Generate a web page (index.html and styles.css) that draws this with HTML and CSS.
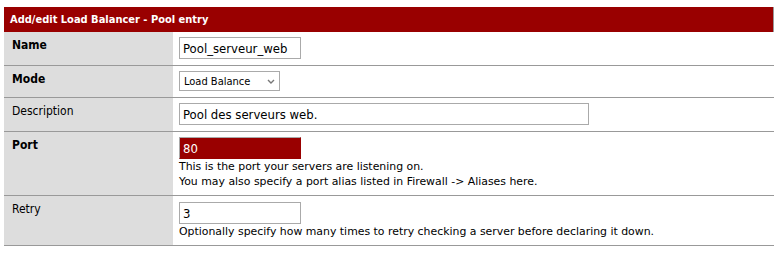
FILE: index.html
```html
<!DOCTYPE html>
<html lang="fr">
<head>
    <meta charset="UTF-8">
    <title>Load Balancer - Pool entry</title>
    <link rel="stylesheet" href="styles.css">
</head>
<body>
    <table class="form-table">
        <tr>
            <td colspan="2" class="list-topic">Add/edit Load Balancer - Pool entry</td>
        </tr>
        <tr>
            <td class="cell-label req">Name</td>
            <td class="cell-value"><input type="text" class="field field-short" value="Pool_serveur_web"></td>
        </tr>
        <tr>
            <td class="cell-label req">Mode</td>
            <td class="cell-value">
                <div class="select-wrap">
                    <select class="select">
                        <option selected>Load Balance</option>
                        <option>Manual Failover</option>
                    </select>
                    <svg class="select-arrow" width="8" height="5" viewBox="0 0 8 5"><path d="M1 1 L4 4 L7 1" fill="none" stroke="#777" stroke-width="1.4"/></svg>
                </div>
            </td>
        </tr>
        <tr>
            <td class="cell-label">Description</td>
            <td class="cell-value"><input type="text" class="field field-long" value="Pool des serveurs web."></td>
        </tr>
        <tr>
            <td class="cell-label req">Port</td>
            <td class="cell-value">
                <input type="text" class="field field-short field-alias" value="80">
                <div class="help">This is the port your servers are listening on.<br>You may also specify a port alias listed in Firewall -&gt; Aliases here.</div>
            </td>
        </tr>
        <tr>
            <td class="cell-label">Retry</td>
            <td class="cell-value cell-loose">
                <input type="text" class="field field-short" value="3">
                <div class="help">Optionally specify how many times to retry checking a server before declaring it down.</div>
            </td>
        </tr>
    </table>
</body>
</html>
```

FILE: styles.css
```css
body {
    margin: 7px 0 0 4px;
    font-family: Tahoma, "DejaVu Sans Condensed", "DejaVu Sans", sans-serif;
    font-size: 11px;
    color: #000;
    background-color: #fff;
}
.form-table {
    width: 770px;
    border-collapse: collapse;
}
.form-table td {
    vertical-align: top;
    border-bottom: 1px solid #999;
}
.list-topic {
    height: 25px;
    box-sizing: border-box;
    padding: 0 6px;
    background-color: #990000;
    color: #fff;
    font-weight: bold;
    font-size: 11px;
    vertical-align: middle !important;
    border-bottom: none !important;
    border-right: 1px solid #999;
}
.cell-label {
    width: 153px;
    padding: 6px 8px;
    background-color: #dddddd;
    font-size: 12px;
    line-height: 15px;
}
.req {
    font-weight: bold;
}
.cell-value {
    padding: 5px 6px 6px;
}
.cell-loose {
    padding-top: 6px;
}
.field {
    display: block;
    box-sizing: border-box;
    height: 22px;
    margin: 0;
    padding: 1px 3px 0;
    border: 1px solid #aaa;
    font-family: inherit;
    font-size: 13px;
    color: #000;
    outline: none;
}
.field-short {
    width: 122px;
}
.field-long {
    width: 410px;
}
.field-alias {
    background-color: #990000;
    color: #fff;
    border-color: #aaa #990000 #990000 #aaa;
}
.select-wrap {
    position: relative;
    width: 101px;
}
.select {
    display: block;
    box-sizing: border-box;
    width: 101px;
    height: 20px;
    margin: 0;
    padding: 0 0 0 4px;
    border: 1px solid #aaa;
    border-radius: 0;
    background-color: #fff;
    font-family: inherit;
    font-size: 11px;
    color: #000;
    appearance: none;
    -webkit-appearance: none;
}
.select-arrow {
    position: absolute;
    right: 5px;
    top: 8px;
    pointer-events: none;
}
.help {
    font-family: "DejaVu Sans", sans-serif;
    font-size: 10.9px;
    line-height: 15px;
}
```
